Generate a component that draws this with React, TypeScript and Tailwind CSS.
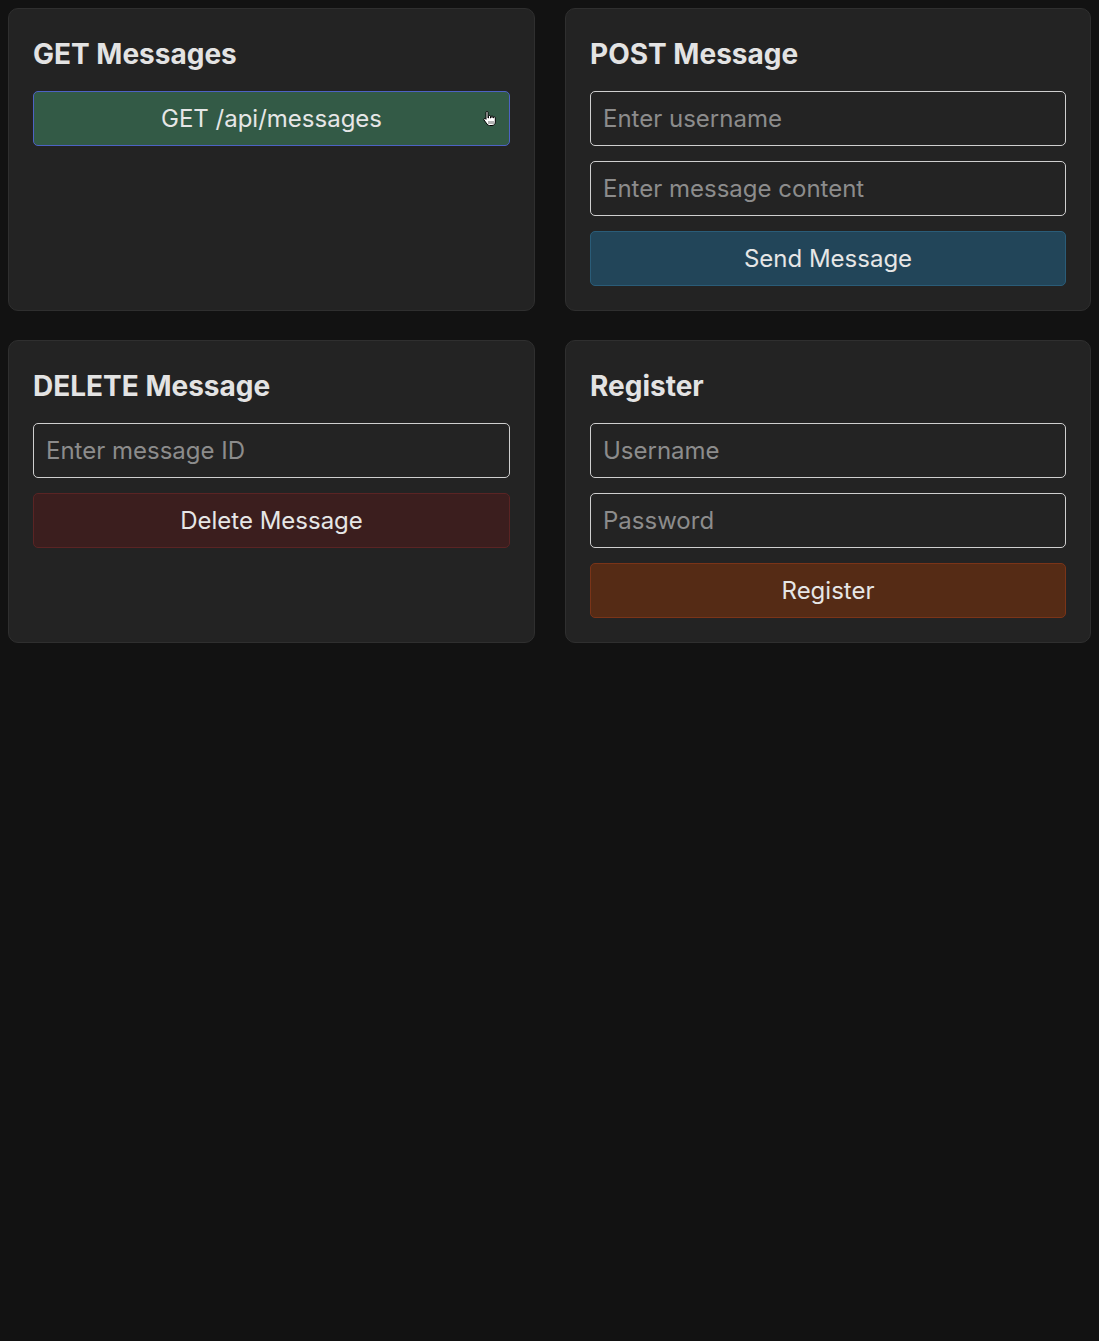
const FONT = { fontFamily: 'Inter, "Noto Sans", sans-serif' }

function Card({ title, children }: { title: string; children: React.ReactNode }) {
  return (
    <div className="rounded-[10px] border border-[#2f2f2f] bg-[#232323] p-6">
      <h2 className="mb-4 text-[28px] leading-[42px] font-bold text-[#e3e3e3]">{title}</h2>
      <div className="flex flex-col gap-[15px]">{children}</div>
    </div>
  )
}

function Field({ placeholder }: { placeholder: string }) {
  return (
    <input
      placeholder={placeholder}
      className="h-[55px] w-full rounded-[5px] border border-[#cfcfcf] bg-transparent px-3 text-[24px] text-[#e3e3e3] outline-none placeholder:text-[#8c8c8c]"
      style={FONT}
    />
  )
}

function Cursor() {
  return (
    <svg width="14" height="16" viewBox="0 0 14 16" className="absolute top-[19px] left-[449px]">
      <path
        d="M3 1.5a1 1 0 0 1 2 0V7h.5V5.5a1 1 0 0 1 2 0V7H8V6a1 1 0 0 1 2 0v1h.3V6.8a1 1 0 0 1 2 0V11c0 2-1.3 3.5-3.3 3.5H6.5c-1 0-1.8-.5-2.4-1.3L1 9a1 1 0 0 1 1.5-1.3L3 8.3z"
        fill="#fff"
        stroke="#000"
        strokeWidth="1"
      />
      <path d="M6 10v3M8 10v3M10 10v3" stroke="#555" strokeWidth="0.9" />
    </svg>
  )
}

export default function App() {
  return (
    <div className="min-h-[1341px] bg-[#121212] p-2" style={FONT}>
      <div className="grid grid-cols-[527px_1fr] gap-x-[30px] gap-y-[29px]">
        <Card title="GET Messages">
          <button className="relative h-[55px] w-full rounded-[5px] border border-[#4d62c4] bg-[#335a46] text-[24px] text-[#e6e6e6]">
            GET /api/messages
            <Cursor />
          </button>
        </Card>
        <Card title="POST Message">
          <Field placeholder="Enter username" />
          <Field placeholder="Enter message content" />
          <button className="h-[55px] w-full rounded-[5px] border border-[#2a5c78] bg-[#224559] text-[24px] text-[#e6e6e6]">
            Send Message
          </button>
        </Card>
        <Card title="DELETE Message">
          <Field placeholder="Enter message ID" />
          <button className="h-[55px] w-full rounded-[5px] border border-[#5a2424] bg-[#3b1e1e] text-[24px] text-[#e6e6e6]">
            Delete Message
          </button>
        </Card>
        <Card title="Register">
          <Field placeholder="Username" />
          <Field placeholder="Password" />
          <button className="h-[55px] w-full rounded-[5px] border border-[#7a3418] bg-[#552b15] text-[24px] text-[#e6e6e6]">
            Register
          </button>
        </Card>
      </div>
    </div>
  )
}
